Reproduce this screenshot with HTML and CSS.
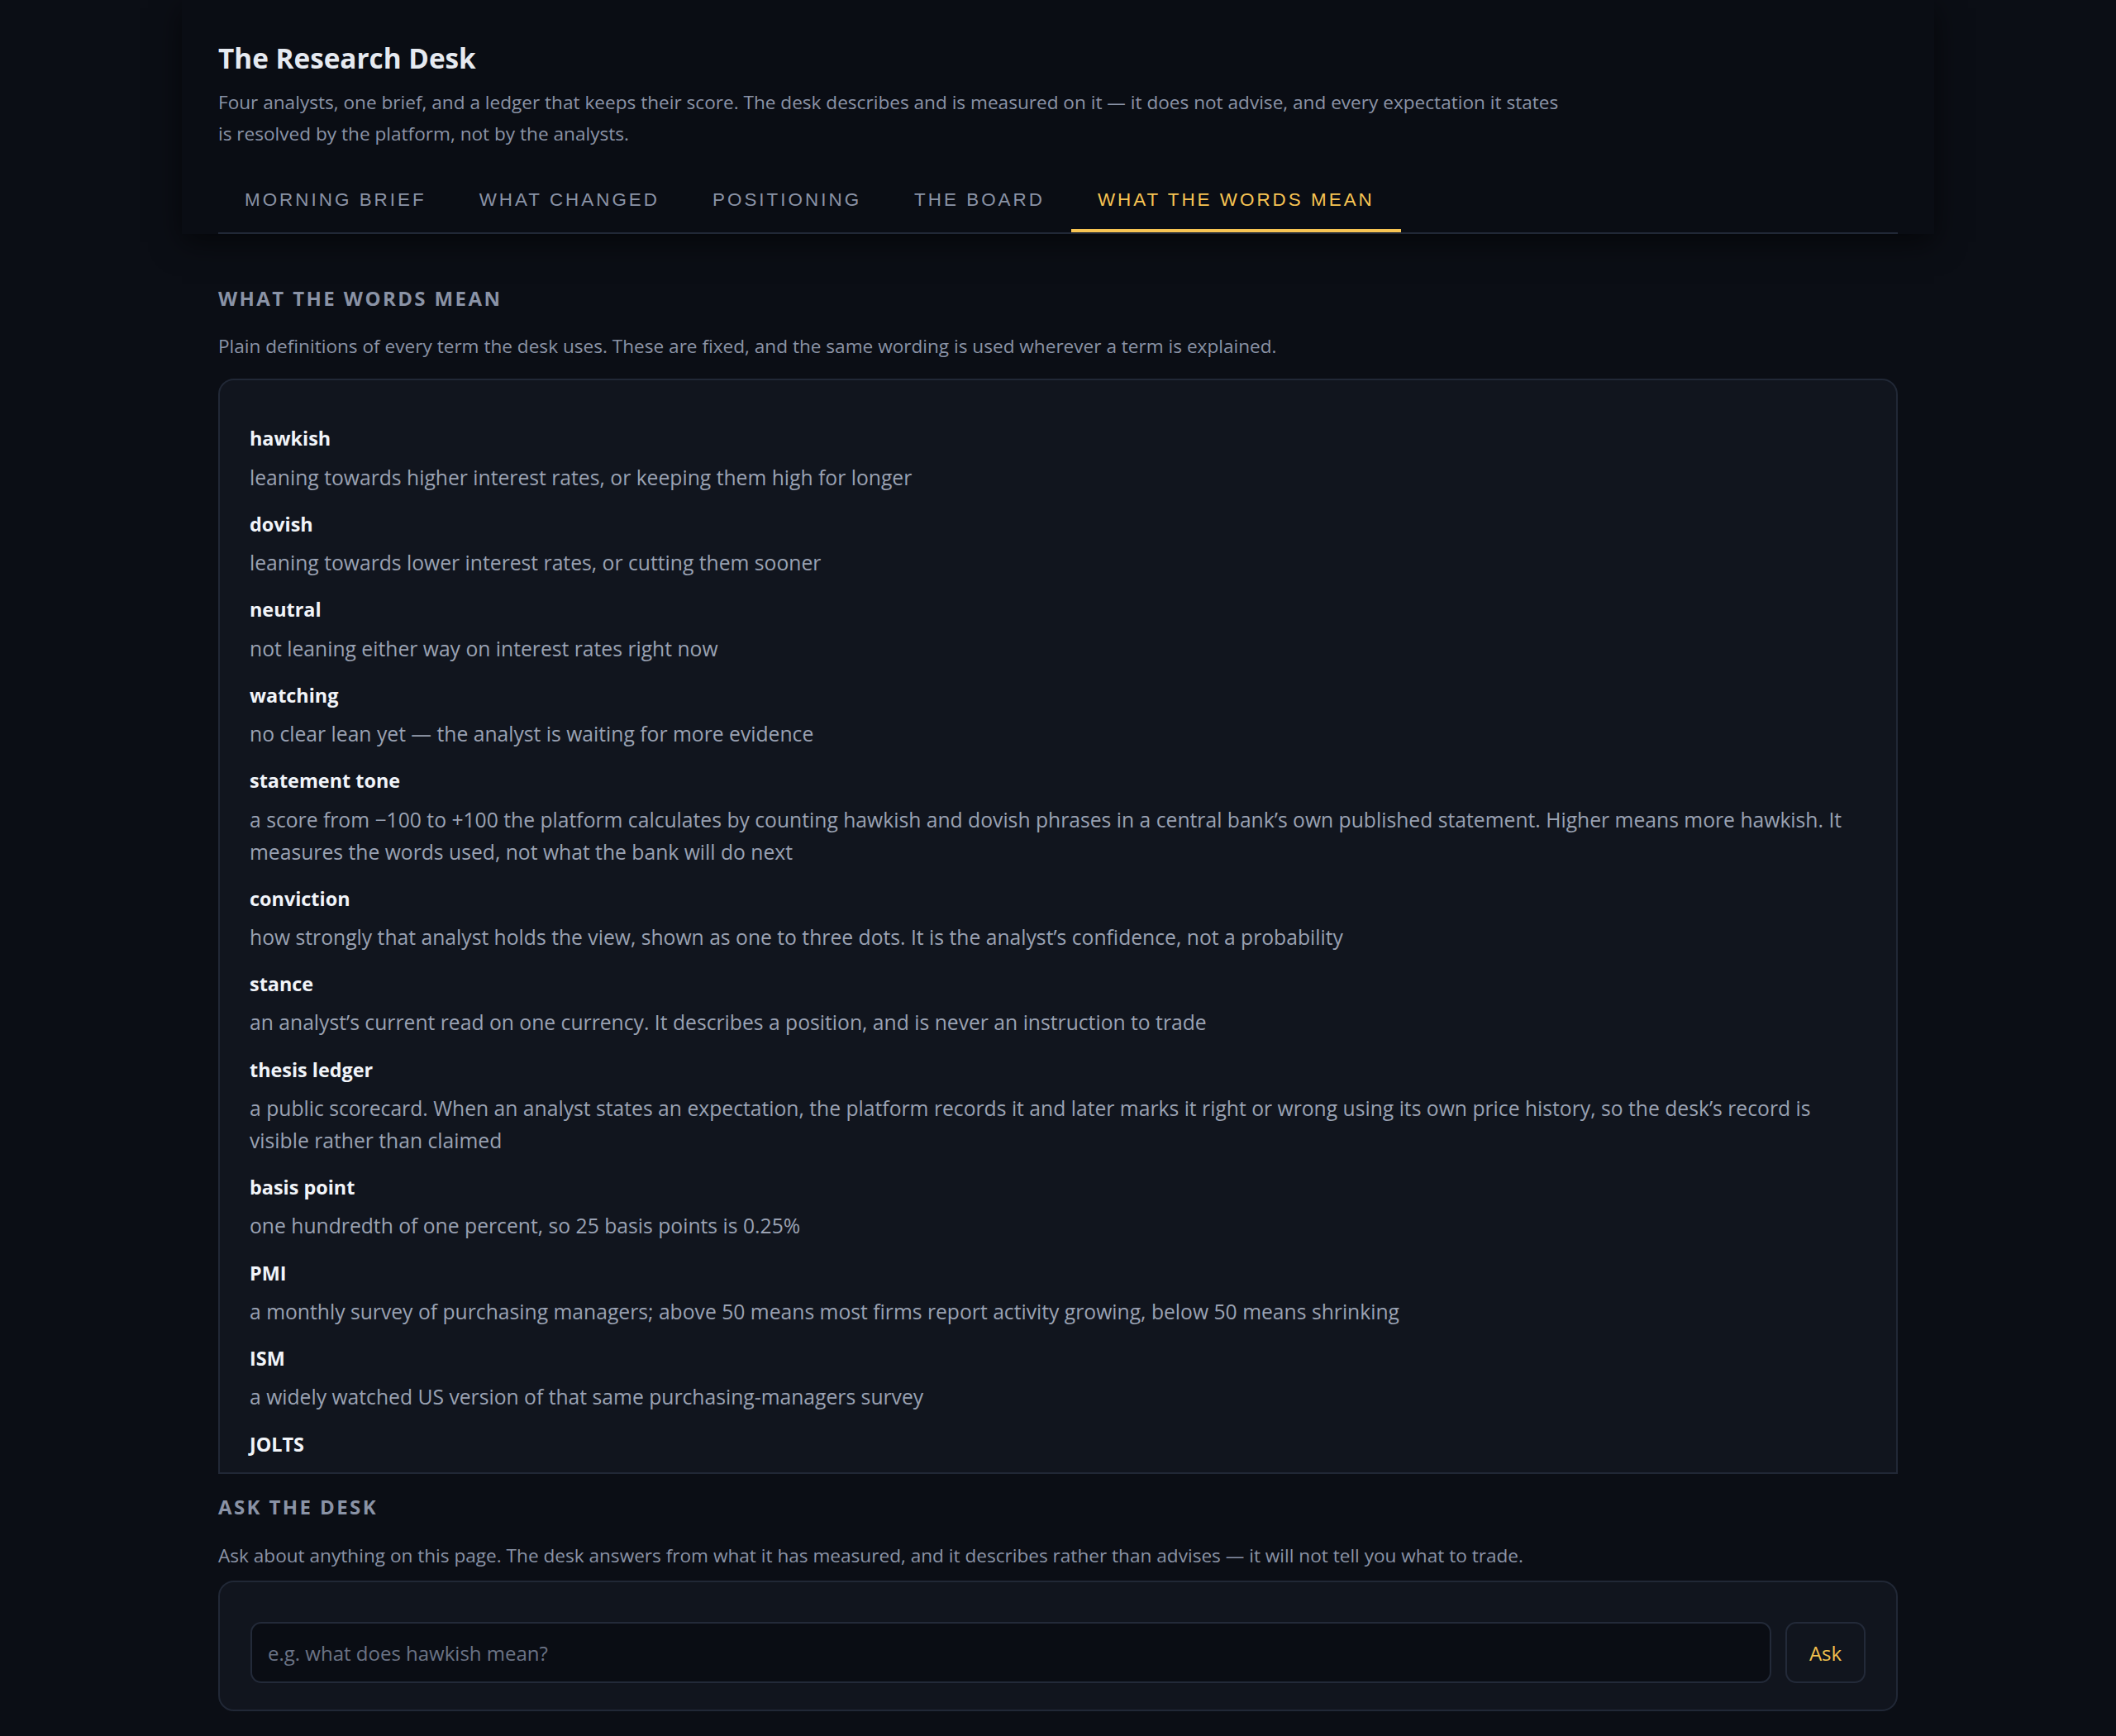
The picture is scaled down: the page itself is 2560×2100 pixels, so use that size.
FILE: index.html
```html
<!DOCTYPE html>
<html lang="en">
<head>
<meta charset="utf-8">
<title>The Research Desk</title>
<link rel="stylesheet" href="styles.css">
</head>
<body>
<header class="header">
  <h1 class="title">The Research Desk</h1>
  <p class="lede">Four analysts, one brief, and a ledger that keeps their score. The desk describes and is measured on it — it does not advise, and every expectation it states is resolved by the platform, not by the analysts.</p>
  <nav class="tabs">
    <a class="tab">Morning brief</a>
    <a class="tab">What changed</a>
    <a class="tab">Positioning</a>
    <a class="tab">The board</a>
    <a class="tab active">What the words mean</a>
  </nav>
</header>
<main class="main">
  <section class="section">
    <h2 class="section-title">What the words mean</h2>
    <p class="section-sub">Plain definitions of every term the desk uses. These are fixed, and the same wording is used wherever a term is explained.</p>
    <dl class="glossary">
      <div class="entry"><dt class="term">hawkish</dt><dd class="def">leaning towards higher interest rates, or keeping them high for longer</dd></div>
      <div class="entry"><dt class="term">dovish</dt><dd class="def">leaning towards lower interest rates, or cutting them sooner</dd></div>
      <div class="entry"><dt class="term">neutral</dt><dd class="def">not leaning either way on interest rates right now</dd></div>
      <div class="entry"><dt class="term">watching</dt><dd class="def">no clear lean yet — the analyst is waiting for more evidence</dd></div>
      <div class="entry"><dt class="term">statement tone</dt><dd class="def">a score from −100 to +100 the platform calculates by counting hawkish and dovish phrases in a central bank’s own published statement. Higher means more hawkish. It measures the words used, not what the bank will do next</dd></div>
      <div class="entry"><dt class="term">conviction</dt><dd class="def">how strongly that analyst holds the view, shown as one to three dots. It is the analyst’s confidence, not a probability</dd></div>
      <div class="entry"><dt class="term">stance</dt><dd class="def">an analyst’s current read on one currency. It describes a position, and is never an instruction to trade</dd></div>
      <div class="entry"><dt class="term">thesis ledger</dt><dd class="def">a public scorecard. When an analyst states an expectation, the platform records it and later marks it right or wrong using its own price history, so the desk’s record is visible rather than claimed</dd></div>
      <div class="entry"><dt class="term">basis point</dt><dd class="def">one hundredth of one percent, so 25 basis points is 0.25%</dd></div>
      <div class="entry"><dt class="term">PMI</dt><dd class="def">a monthly survey of purchasing managers; above 50 means most firms report activity growing, below 50 means shrinking</dd></div>
      <div class="entry"><dt class="term">ISM</dt><dd class="def">a widely watched US version of that same purchasing-managers survey</dd></div>
      <div class="entry"><dt class="term">JOLTS</dt><dd class="def">a monthly US survey of job openings, hires and quits, used to judge how tight the labour market is</dd></div>
    </dl>
  </section>
  <section class="section">
    <h2 class="section-title ask-title">Ask the desk</h2>
    <p class="section-sub">Ask about anything on this page. The desk answers from what it has measured, and it describes rather than advises — it will not tell you what to trade.</p>
    <form class="ask">
      <input class="ask-input" type="text" placeholder="e.g. what does hawkish mean?">
      <button class="ask-btn" type="button">Ask</button>
    </form>
  </section>
</main>
</body>
</html>
```
FILE: styles.css
```css
* { box-sizing: border-box; }
html, body { margin: 0; background: #0b0e15; }
body {
  font-family: "Open Sans", "Noto Sans", sans-serif;
  color: #8a93a6;
}

.header {
  max-width: 2120px;
  margin: 0 auto;
  padding: 50px 44px 0;
  background: #0a0d14;
  box-shadow: 0 10px 34px rgba(0, 0, 0, 0.55);
  position: relative;
  z-index: 1;
}
.title {
  margin: 0;
  font-size: 33.3px;
  line-height: 40.3px;
  font-weight: 700;
  color: #e6eaf1;
}
.lede {
  margin: 15px 0 0;
  font-size: 22.6px;
  line-height: 38.1px;
  max-width: 1634px;
  color: #8a93a6;
}
.tabs {
  display: flex;
  margin-top: 21px;
  border-bottom: 2px solid #212836;
}
.tab {
  font-family: "Liberation Sans", Arial, sans-serif;
  font-size: 22.4px;
  line-height: 25.6px;
  letter-spacing: 0.135em;
  text-transform: uppercase;
  padding: 26.3px 32px 22.3px;
  border-bottom: 4px solid transparent;
  color: #8a93a6;
  cursor: pointer;
}
.tab.active {
  color: #f7c453;
  border-bottom-color: #f7c453;
}

.main {
  width: 2032px;
  margin: 0 auto;
  padding: 64.3px 0 16px;
}
.section-title {
  margin: 0;
  font-size: 24px;
  line-height: 28.8px;
  font-weight: 700;
  letter-spacing: 0.1em;
  text-transform: uppercase;
  color: #8a93a6;
}
.ask-title { margin-top: 26.6px; }
.section-sub {
  margin: 24.6px 0 0;
  font-size: 22.6px;
  line-height: 38.1px;
  color: #8a93a6;
}

.glossary {
  margin: 19.3px 0 0;
  height: 1325px;
  overflow: hidden;
  background: #11151e;
  border: 2px solid #212836;
  border-radius: 19px 19px 0 0;
  padding: 54.6px 36px 36px;
}
.entry + .entry { margin-top: 21.2px; }
.term {
  font-size: 23.4px;
  line-height: 33.6px;
  font-weight: 700;
  color: #f1f4f9;
}
.def {
  margin: 9.7px 0 0;
  font-size: 24.7px;
  line-height: 39px;
  color: #9aa2b3;
}

.ask {
  margin: 11.1px 0 0;
  display: flex;
  gap: 17px;
  background: #11151e;
  border: 2px solid #212836;
  border-radius: 19px;
  padding: 48px 37px 32px;
}
.ask-input {
  flex: 1;
  height: 74.4px;
  background: #0a0d14;
  border: 2px solid #232a39;
  border-radius: 13px;
  padding: 0 19px;
  font-family: "Open Sans", "Noto Sans", sans-serif;
  font-size: 24px;
  color: #e6eaf1;
  outline: none;
}
.ask-input::placeholder { color: #6b7385; }
.ask-btn {
  width: 97px;
  height: 74.4px;
  background: #11151e;
  border: 2px solid #232a39;
  border-radius: 13px;
  font-family: "Open Sans", "Noto Sans", sans-serif;
  font-size: 24px;
  color: #f2c14e;
  cursor: pointer;
}
```
